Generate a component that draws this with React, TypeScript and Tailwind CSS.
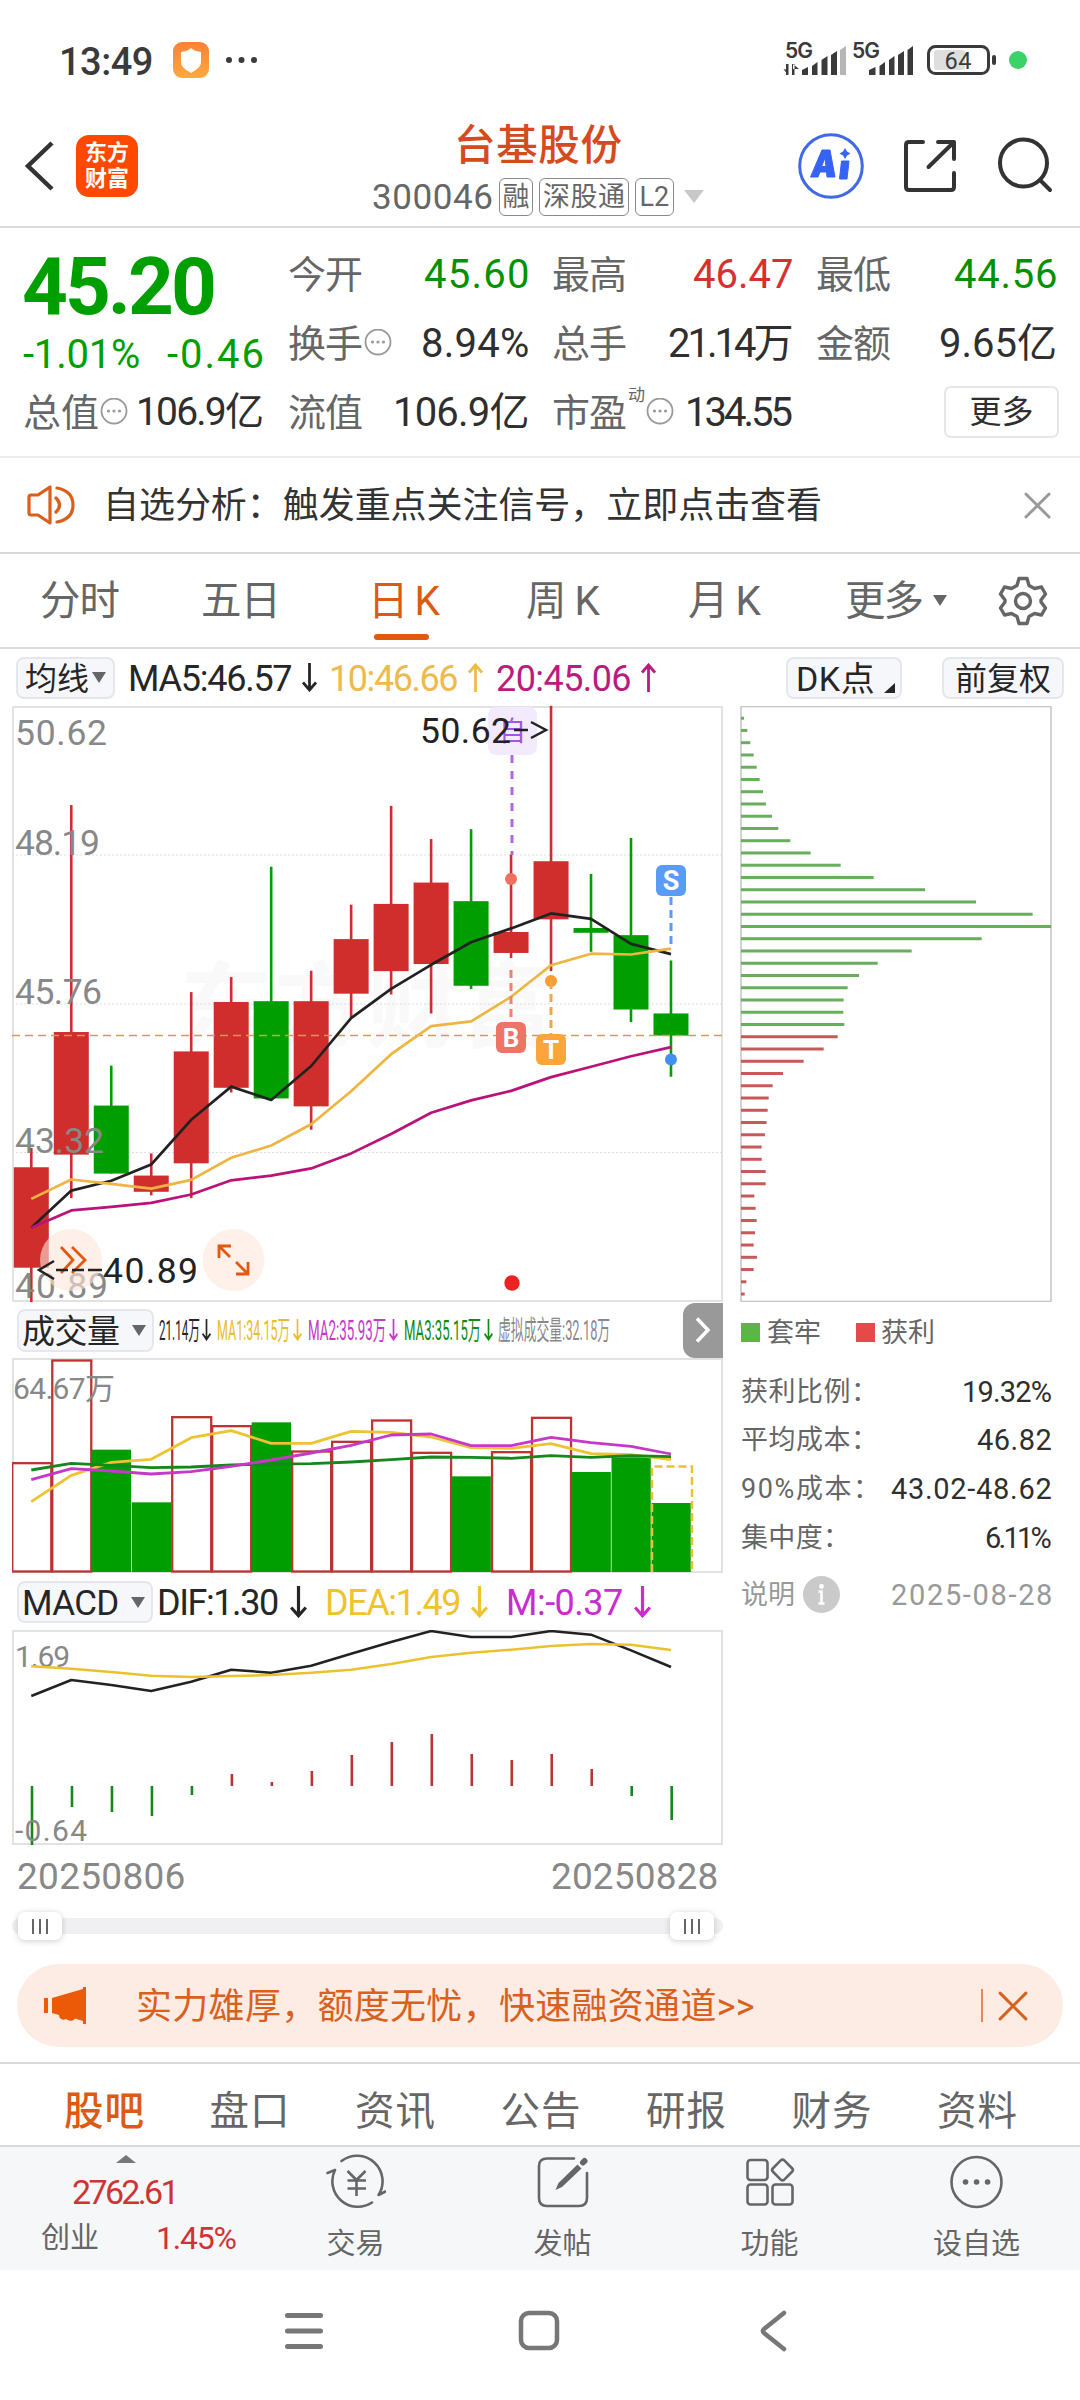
import { useLayoutEffect, useRef, useState } from "react";
import type { ReactNode } from "react";

/* Text set to a given width, either by tracking or by condensing the glyphs. */
function Fit({ w, children, className = "", squeeze = false }: { w: number; children: string; className?: string; squeeze?: boolean }) {
  const ref = useRef<HTMLSpanElement>(null);
  const [natural, setNatural] = useState(0);
  useLayoutEffect(() => {
    if (ref.current && !natural) setNatural(ref.current.offsetWidth);
  }, [natural]);
  const n = Math.max(1, children.length - 1);
  const style = !natural
    ? undefined
    : squeeze
      ? { transform: `scaleX(${w / natural})` }
      : { letterSpacing: `${(w - natural) / n}px` };
  return (
    <span className={`inline-block shrink-0 translate-y-px whitespace-nowrap leading-none ${className}`} style={{ width: w }}>
      <span ref={ref} className="inline-block origin-left" style={style}>
        {children}
      </span>
    </span>
  );
}

function Caret({ className = "", w = 14, h = 11 }: { className?: string; w?: number; h?: number }) {
  return (
    <svg className={`shrink-0 ${className}`} width={w} height={h} viewBox="0 0 14 11" preserveAspectRatio="none">
      <path d="M0 0H14L7 11Z" fill="currentColor" />
    </svg>
  );
}

function Arrow({ up = false, w = 15, h = 29, className = "" }: { up?: boolean; w?: number; h?: number; className?: string }) {
  return (
    <svg className={`shrink-0 ${className}`} width={w} height={h} viewBox="0 0 15 29" fill="none" stroke="currentColor" strokeWidth="2.800" preserveAspectRatio="none">
      {up ? <path d="M7.5 29V1.5M1 9.500L7.5 2L14 9.500" /> : <path d="M7.5 0V27.5M1 19.500L7.5 27L14 19.500" />}
    </svg>
  );
}

function InfoDots({ className = "" }: { className?: string }) {
  return (
    <svg className={`ml-px shrink-0 text-[#999] ${className}`} width="28" height="28" viewBox="0 0 28 28">
      <circle cx="14" cy="13" r="12.5" fill="none" stroke="currentColor" strokeWidth="1.8" />
      <circle cx="8.5" cy="13" r="1.6" fill="currentColor" />
      <circle cx="14" cy="13" r="1.6" fill="currentColor" />
      <circle cx="19.5" cy="13" r="1.6" fill="currentColor" />
    </svg>
  );
}

function Cross({ size, stroke, className = "" }: { size: number; stroke: number; className?: string }) {
  return (
    <svg className={`shrink-0 ${className}`} width={size} height={size} viewBox="0 0 28 28" fill="none" stroke="currentColor" strokeWidth={stroke} strokeLinecap="round">
      <path d="M2 2L26 26M26 2L2 26" />
    </svg>
  );
}

function StatusBar() {
  return (
    <div className="flex h-[118px] shrink-0 items-center pl-[59px] text-[#3a3a3a]">
      <Fit w={94} className="mt-[3px] text-[38px] font-medium">13:49</Fit>
      <svg className="ml-[20px] mt-px" width="36" height="36" viewBox="0 0 36 36">
        <defs>
          <linearGradient id="shield" x1="0" y1="0" x2="0" y2="1">
            <stop offset="0" stopColor="#f9813a" />
            <stop offset="1" stopColor="#ffa93c" />
          </linearGradient>
        </defs>
        <rect width="36" height="36" rx="9" fill="url(#shield)" />
        <path d="M18 6C21 9 25 9.500 28 10V20C28 25 23 28 18 31C13 28 8 25 8 20V10C11 9.500 15 9 18 6Z" fill="#fff" />
      </svg>
      <svg className="ml-[16px] mt-px" width="34" height="8" viewBox="0 0 34 8" fill="#3a3a3a">
        <circle cx="4" cy="4" r="3" />
        <circle cx="16.500" cy="4" r="3" />
        <circle cx="29" cy="4" r="3" />
      </svg>
      <svg className="ml-[521px] mt-[2px]" width="250" height="56" viewBox="780 32 250 56">
        <g fill="#3a3a3a">
          <text x="785" y="58" fontSize="21" fontWeight="600" textLength="28" fontFamily="Inter, sans-serif">5G</text>
          <text x="852" y="58" fontSize="21" fontWeight="600" textLength="28" fontFamily="Inter, sans-serif">5G</text>
          <path d="M786 64V75H788.500V64ZM783.500 69L788 75V70ZM792 75V64H794.500V75ZM799 69L793 64V69Z" />
          <path d="M802 70L808 67V75H802ZM812 66L817.500 62V75H812ZM821.500 60L827.500 56V75H821.500ZM831 55L837 51V75H831Z" />
          <path d="M840 50L846 46V75H840Z" fill="#b5b5b5" />
          <path d="M869 70L875.500 67V75H869ZM879.500 66L885 62V75H879.500ZM889 60L894.500 56V75H889ZM898 55L904 51V75H898ZM907.500 50L913 46V75H907.500Z" />
        </g>
        <rect x="934" y="50" width="31" height="20" rx="3" fill="#dedede" />
        <rect x="928.500" y="46.500" width="60" height="27" rx="7" fill="none" stroke="#3a3a3a" strokeWidth="3" />
        <rect x="992" y="55" width="4" height="10" rx="2" fill="#3a3a3a" />
        <text x="944.500" y="69" fontSize="23.500" fontWeight="400" textLength="27" fill="#3a3a3a">64</text>
        <circle cx="1018" cy="60" r="9" fill="#3bd269" />
      </svg>
    </div>
  );
}

function Tag({ children, w, tw }: { children: string; w: number; tw: number }) {
  return (
    <span className="flex h-[38px] items-center justify-center rounded-[6px] border border-[#8a8a8a]" style={{ width: w }}>
      <Fit w={tw} className="text-[27px]">{children}</Fit>
    </span>
  );
}

function Header() {
  return (
    <div className="flex h-[110px] shrink-0 items-start border-b-2 border-[#dcdcdc] pl-6">
      <svg className="mt-[22px]" width="30" height="52" viewBox="0 0 30 52" fill="none" stroke="#333" strokeWidth="4.500">
        <path d="M28 3L4 26L28 49" />
      </svg>
      <div className="ml-[22px] mt-[17px] flex size-[62px] flex-col items-center justify-center rounded-[13px] bg-[#ff4800] text-[22px] font-bold text-white">
        <span className="leading-[26px]">东方</span>
        <span className="leading-[26px]">财富</span>
      </div>
      <div className="ml-[232px] flex w-[336px] flex-col items-center">
        <Fit w={168} className="mt-[6px] text-[41.500px] font-medium text-[#d64a20]">台基股份</Fit>
        <div className="mt-[12px] flex items-center gap-[6px] text-[#666]">
          <Fit w={121} className="text-[35px]">300046</Fit>
          <Tag w={34} tw={27}>融</Tag>
          <Tag w={90} tw={82}>深股通</Tag>
          <Tag w={39} tw={30}>L2</Tag>
          <Caret className="ml-1 text-[#c8c8c8]" w={20} h={13} />
        </div>
      </div>
      <svg className="ml-[89px] mt-[12px]" width="265" height="72" viewBox="795 130 265 72" fill="none">
        <circle cx="831" cy="166" r="31.300" stroke="#3f69e6" strokeWidth="3" />
        <g fill="#3563f5">
          <path d="M822 150H830L835 177H827L826.500 172H820L818 177H810.500ZM825 158L821.500 166.500H826Z" fillRule="evenodd" stroke="#3563f5" strokeLinejoin="round" />
          <path d="M841.500 161H849L847 179H839.500Z" stroke="#3563f5" strokeLinejoin="round" />
          <path d="M845 148L847 151.500L850.500 153.500L847 155.500L845 159L843 155.500L839.500 153.500L843 151.500Z" />
        </g>
        <g stroke="#333" strokeWidth="4" strokeLinecap="round" strokeLinejoin="round">
          <path d="M923 142H909Q906 142 906 145V187Q906 190 909 190H951Q954 190 954 187V173M938 142H954V159M954 142L928.500 167" />
          <circle cx="1023.500" cy="163" r="23.500" />
          <path d="M1040 180L1050 190" />
        </g>
      </svg>
    </div>
  );
}

function Cell({ label, lw = 75, value, vw, color = "text-[#2f2f2f]", after }: { label: string; lw?: number; value: string; vw: number; color?: string; after?: ReactNode }) {
  return (
    <div className="flex h-[69px] w-[241px] items-center justify-between">
      <div className="flex items-center">
        <Fit w={lw} className="text-[38px] text-[#666]">{label}</Fit>
        {after}
      </div>
      <Fit w={vw} className={`text-[40px] ${color}`}>{value}</Fit>
    </div>
  );
}

function Quote() {
  return (
    <div className="flex h-[230px] shrink-0 border-b-2 border-[#ececec] pl-[23px] pt-[11px]">
      <div className="w-[241px] text-[#009f00]">
        <Fit w={195} className="-ml-px mt-[7px] text-[80px] font-bold">45.20</Fit>
        <div className="mt-[6px] flex h-[44px] items-center justify-between">
          <Fit w={117} className="text-[40px]">-1.01%</Fit>
          <Fit w={97} className="text-[40px]">-0.46</Fit>
        </div>
        <div className="mt-[1px] flex h-[69px] items-center text-[#2f2f2f]">
          <Fit w={76} className="text-[38px] text-[#666]">总值</Fit>
          <InfoDots />
          <Fit w={128} className="ml-[8px] text-[39px]">106.9亿</Fit>
        </div>
      </div>
      <div className="ml-[24px] grid grid-cols-[241px_241px_241px] content-start gap-x-[23px]">
        <Cell label="今开" value="45.60" vw={105} color="text-[#009200]" />
        <Cell label="最高" value="46.47" vw={100} color="text-[#d6302f]" />
        <Cell label="最低" value="44.56" vw={103} color="text-[#009200]" />
        <Cell label="换手" value="8.94%" vw={108} after={<InfoDots />} />
        <Cell label="总手" value="21.14万" vw={125} />
        <Cell label="金额" value="9.65亿" vw={118} />
        <Cell label="流值" value="106.9亿" vw={136} />
        <Cell
          label="市盈"
          value="134.55"
          vw={108}
          after={
            <>
              <span className="-mt-[32px] ml-px text-[17px] leading-none text-[#666]">动</span>
              <InfoDots className="ml-[4px]" />
            </>
          }
        />
        <div className="flex h-[69px] items-center justify-end">
          <span className="-mr-[2px] flex h-[52px] w-[115px] items-center justify-center rounded-[7px] border-2 border-[#e6e6e6] text-[32px] leading-none text-[#2f2f2f]">更多</span>
        </div>
      </div>
    </div>
  );
}

function Notice() {
  return (
    <div className="flex h-[96px] shrink-0 items-center border-b-2 border-[#d8d8d8] pl-[27px]">
      <svg width="48" height="42" viewBox="0 0 48 42" fill="none" stroke="#d95f1c" strokeWidth="3.200" strokeLinejoin="round" strokeLinecap="round">
        <path d="M4 11H11L23 3V39L11 31H4Q2 31 2 29V13Q2 11 4 11Z" />
        <path d="M29 14Q36 21 29 28" />
        <path d="M30 4Q46 7 46 21Q46 35 30 38" />
      </svg>
      <Fit w={719} className="ml-[28px] text-[36px] text-[#333]">自选分析：触发重点关注信号，立即点击查看</Fit>
      <Cross size={27} stroke={3} className="ml-[202px] text-[#999]" />
    </div>
  );
}

const periods = [
  { label: "分时", cls: "ml-[40px]", w: 80 },
  { label: "五日", cls: "ml-[81px]", w: 80 },
  { label: "日K", cls: "ml-[87px]", w: 72 },
  { label: "周K", cls: "ml-[86px]", w: 74 },
  { label: "月K", cls: "ml-[88px]", w: 73 },
  { label: "更多", cls: "ml-[84px]", w: 79 },
];

function Periods() {
  return (
    <div className="flex h-[95px] shrink-0 items-center border-b-2 border-[#dcdcdc] text-[#666]">
      {periods.map((p) => (
        <div key={p.label} className={`relative ${p.cls} ${p.label === "日K" ? "text-[#dc5a12]" : ""}`}>
          <Fit w={p.w} className="text-[40.500px]">{p.label}</Fit>
          {p.label === "日K" && <div className="absolute left-[6px] top-[54px] h-[6px] w-[55px] rounded-full bg-[#de5a10]" />}
        </div>
      ))}
      <Caret className="ml-[9px]" />
      <svg className="ml-[51px]" width="50" height="50" viewBox="0 0 50 50" fill="none" stroke="#666" strokeWidth="3.400" strokeLinejoin="round">
        <path d="M21 2.500H29L31 9.500L36.500 12.500L43.500 11L47.500 18L43 24V26L47.500 32L43.500 39L36.500 37.500L31 40.500L29 47.500H21L19 40.500L13.500 37.500L6.500 39L2.500 32L7 26V24L2.500 18L6.500 11L13.500 12.500L19 9.500Z" />
        <circle cx="25" cy="25" r="7.500" />
      </svg>
    </div>
  );
}

const pill = "flex shrink-0 items-center rounded-[8px] border-2 border-[#e5e7ec] bg-[#f6f7fa] text-[#262626]";

function MaBar() {
  return (
    <div className="flex h-[57px] shrink-0 items-center pl-[16px]">
      <div className={`${pill} h-[42px] w-[99px] pl-[7px]`}>
        <Fit w={64} className="text-[32px]">均线</Fit>
        <Caret className="ml-[3px] text-[#666]" />
      </div>
      <Fit w={165} className="ml-[13px] text-[36px] text-[#262626]">MA5:46.57</Fit>
      <Arrow className="ml-[9px] text-[#262626]" />
      <Fit w={130} className="ml-[12px] text-[36px] text-[#efba4d]">10:46.66</Fit>
      <Arrow up className="ml-[9px] text-[#efba4d]" />
      <Fit w={136} className="ml-[13px] text-[36px] text-[#b91c7e]">20:45.06</Fit>
      <Arrow up className="ml-[9px] text-[#b91c7e]" />
      <div className={`${pill} ml-[130px] h-[42px] w-[116px] pl-[8px]`}>
        <Fit w={79} className="text-[34px]">DK点</Fit>
        <svg className="ml-[9px] mt-[20px]" width="11" height="10" viewBox="0 0 11 10">
          <path d="M11 0V10H0Z" fill="#262626" />
        </svg>
      </div>
      <div className={`${pill} ml-[40px] h-[42px] w-[122px] justify-center`}>
        <Fit w={96} className="text-[32px]">前复权</Fit>
      </div>
    </div>
  );
}

/* Horizontal position of the n-th trading day. */
const dayX = (i: number) => 19.3 + i * 39.98;
const line = (values: number[], y: (v: number) => number) => values.map((v, i) => `${dayX(i).toFixed(1)},${y(v).toFixed(1)}`).join(" ");

const RED = "#cf2e2c";
const GREEN = "#009e00";

/* up?, high, body top, body bottom, low */
const candles: [number, number, number, number, number][] = [
  [1, 1158, 1207, 1461, 1548], [1, 291, 865, 1175, 1285], [0, 950, 1051, 1223, 1223], [1, 1172, 1228, 1269, 1278],
  [1, 764, 914, 1197, 1285], [1, 726, 789, 1006, 1018], [0, 447, 787, 1033, 1033], [1, 710, 787, 1053, 1112],
  [1, 543, 630, 768, 828], [1, 293, 541, 711, 770], [1, 377, 487, 693, 818], [0, 352, 534, 748, 756],
  [1, 416, 612, 665, 678], [1, 40, 433, 580, 711], [0, 465, 602, 614, 662], [0, 374, 620, 808, 840], [0, 684, 818, 874, 978],
];
const ma5 = [1360, 1266, 1241, 1200, 1087, 1003, 1037, 951, 830, 756, 695, 638, 603, 565, 579, 642, 668];
const ma10 = [1287, 1238, 1249, 1261, 1239, 1183, 1152, 1098, 1015, 921, 850, 838, 776, 696, 667, 669, 654];
const ma20 = [1360, 1316, 1307, 1297, 1276, 1240, 1228, 1210, 1172, 1123, 1069, 1038, 1014, 979, 953, 926, 903];
const priceY = (v: number) => v / 2.529 - 16;

function CandleChart() {
  return (
    <svg className="block overflow-visible" width="711" height="596" viewBox="0 0 711 596">
      <rect x="1" y="1" width="709" height="594" fill="#fff" stroke="#e2e2e2" strokeWidth="2" />
      <text x="168" y="334" fontSize="93" fontWeight="700" textLength="374" fill="#f9f9f9">东方财富</text>
      <g stroke="#dedede" strokeDasharray="2 2">
        <path d="M0 149H711M0 298H711M0 446.500H711" />
      </g>
      {candles.map(([up, h, t, b, l], i) => (
        <g key={i} fill={up ? RED : GREEN}>
          <rect x={dayX(i) - 1.3} y={priceY(h)} width="2.600" height={priceY(l) - priceY(h)} />
          <rect x={dayX(i) - 17.5} y={priceY(t)} width="35" height={priceY(b) - priceY(t)} />
        </g>
      ))}
      <path d="M0 329.500H711" stroke="#cf9d55" strokeWidth="1.500" strokeDasharray="8 5" />
      <g fontSize="35.500" fill="#888">
        <text x="3" y="39" textLength="92">50.62</text>
        <text x="3" y="149" textLength="85">48.19</text>
        <text x="3" y="298" textLength="87">45.76</text>
        <text x="3" y="447" textLength="89">43.32</text>
        <text x="3" y="592" textLength="93">40.89</text>
      </g>
      <g fill="none" strokeWidth="2.700" strokeLinejoin="round">
        <polyline points={line(ma5, priceY)} stroke="#222" />
        <polyline points={line(ma10, priceY)} stroke="#f0b441" />
        <polyline points={line(ma20, priceY)} stroke="#bb1279" />
      </g>
      <g>
        <rect x="476" y="1" width="49" height="48" rx="8" fill="#f4eafd" />
        <text x="487" y="35" fontSize="27" fill="#a158dd">自</text>
        <path d="M500 49V149" stroke="#a66be0" strokeWidth="3" strokeDasharray="8 8" />
        <circle cx="499" cy="173" r="6" fill="#f0705f" />
        <path d="M499 264V316" stroke="#f0806f" strokeWidth="3" strokeDasharray="8 5" />
        <rect x="484" y="316" width="30" height="31" rx="6" fill="#ee7466" />
        <text x="499" y="340.500" fontSize="26" fontWeight="700" textAnchor="middle" fill="#fff">B</text>
        <circle cx="539" cy="275" r="6" fill="#f79d33" />
        <path d="M539 275V328" stroke="#f3a548" strokeWidth="3" strokeDasharray="8 5" />
        <rect x="524" y="328" width="30" height="31" rx="6" fill="#fba53b" />
        <text x="539" y="352.500" fontSize="26" fontWeight="700" textAnchor="middle" fill="#fff">T</text>
        <rect x="644" y="159" width="30" height="31" rx="6" fill="#5b9bf8" />
        <text x="659" y="184" fontSize="27" fontWeight="700" textAnchor="middle" fill="#fff">S</text>
        <path d="M659 191V242" stroke="#5b9bf8" strokeWidth="3" strokeDasharray="8 5" />
        <circle cx="659" cy="353.500" r="6" fill="#4190ee" />
        <circle cx="500" cy="577" r="7.700" fill="#ee2222" />
      </g>
      <circle cx="59" cy="554" r="31" fill="#fee5d8" fillOpacity="0.600" />
      <circle cx="221.500" cy="554" r="31" fill="#fff1ea" />
      <g fill="none" stroke="#e4590f" strokeWidth="2.800">
        <path d="M49 541L61 554L49 567M60 541L73 554L60 567" />
        <path d="M219 540H207V552M207 540L218 551M224 568H236V556M236 568L224 556" />
      </g>
      <g fontSize="35.500" fill="#222">
        <text x="408" y="36.500" textLength="91">50.62</text>
        <text x="91" y="576.500" textLength="95">40.89</text>
      </g>
      <g fill="none" stroke="#222" strokeWidth="2.500">
        <path d="M502 24H516M519 16L534 24L519 32" />
        <path d="M42 555L27 564L42 573M44 564H56M60 564H72M76 564H90" />
      </g>
    </svg>
  );
}

const volumes: [number, number][] = [
  [1, 488], [1, 180], [0, 449], [0, 607], [1, 350], [1, 377], [0, 367], [1, 453], [1, 424],
  [1, 360], [1, 457], [0, 529], [1, 455], [1, 352], [0, 516], [0, 472], [0, 609],
];
const vol1 = [605, 526, 487, 478, 413, 392, 430, 430, 394, 397, 411, 443, 445, 431, 461, 464, 479];
const vol2 = [539, 506, 513, 522, 515, 499, 480, 459, 436, 405, 402, 437, 437, 412, 428, 439, 462];
const vol3 = [510, 490, 496, 503, 501, 495, 492, 491, 486, 479, 471, 472, 475, 467, 472, 467, 470];
const volY = (v: number) => v / 3 - 58;

function VolumeChart() {
  return (
    <svg className="block" width="711" height="216" viewBox="0 0 711 216">
      <rect x="1" y="1" width="709" height="213" fill="none" stroke="#e2e2e2" strokeWidth="2" />
      {volumes.map(([up, t], i) =>
        up ? (
          <rect key={i} x={dayX(i) - 19} y={volY(t) + 0.5} width="39" height={213 - volY(t)} fill="#fff" stroke="#bb3431" strokeWidth="2.300" />
        ) : (
          <rect key={i} x={dayX(i) - 19.5} y={volY(t)} width="39.300" height={214 - volY(t)} fill={GREEN} />
        ),
      )}
      <path d="M640 214V108.500H680V214" fill="none" stroke="#e8c234" strokeWidth="2.500" strokeDasharray="8 4" />
      <text x="1" y="41" fontSize="30" textLength="102" fill="#888">64.67万</text>
      <g fill="none" strokeWidth="2.800" strokeLinejoin="round">
        <polyline points={line(vol1, volY)} stroke="#edc233" />
        <polyline points={line(vol3, volY)} stroke="#15871c" />
        <polyline points={line(vol2, volY)} stroke="#c637ca" />
      </g>
    </svg>
  );
}

const dif = [348, 300, 315, 333, 305, 269, 278, 257, 221, 186, 153, 171, 171, 153, 164, 211, 261];
const dea = [259, 266, 276, 287, 291, 288, 285, 278, 269, 252, 231, 218, 209, 198, 192, 194, 210];
const hist = [795, 681, 696, 708, 645, 582, 606, 573, 525, 486, 462, 522, 540, 522, 567, 648, 720];
const macdY = (v: number) => v / 3 - 50;

function MacdChart() {
  return (
    <svg className="block" width="711" height="216" viewBox="0 0 711 216">
      <rect x="1" y="1" width="709" height="213" fill="none" stroke="#e2e2e2" strokeWidth="2" />
      {hist.map((v, i) => (
        <rect key={i} x={dayX(i) - 0.6} y={macdY(Math.min(v, 618))} width="2.600" height={Math.abs(v - 618) / 3} fill={v < 618 ? "#bb3431" : "#15871c"} />
      ))}
      <g fontSize="30" fill="#888">
        <text x="3" y="37" textLength="55">1.69</text>
        <text x="3" y="211" textLength="72">-0.64</text>
      </g>
      <g fill="none" strokeWidth="2.500" strokeLinejoin="round">
        <polyline points={line(dif, macdY)} stroke="#222" />
        <polyline points={line(dea, macdY)} stroke="#ebc22c" />
      </g>
    </svg>
  );
}

function VolumeBar() {
  return (
    <div className="flex h-[56px] items-center pl-[5px]">
      <div className={`${pill} h-[43px] w-[137px] pl-[3px]`}>
        <Fit w={98} className="text-[33px]">成交量</Fit>
        <Caret className="ml-[12px] text-[#666]" w={14} h={11} />
      </div>
      <Fit squeeze w={41} className="ml-[5px] text-[27px] text-[#262626]">21.14万</Fit>
      <Arrow w={9} h={22} className="ml-[2px] text-[#262626]" />
      <Fit squeeze w={73} className="ml-[6px] text-[27px] text-[#e8bd2c]">MA1:34.15万</Fit>
      <Arrow w={9} h={22} className="ml-[3px] text-[#e8bd2c]" />
      <Fit squeeze w={78} className="ml-[6px] text-[27px] text-[#c637ca]">MA2:35.93万</Fit>
      <Arrow w={9} h={22} className="ml-[3px] text-[#c637ca]" />
      <Fit squeeze w={77} className="ml-[6px] text-[27px] text-[#128a14]">MA3:35.15万</Fit>
      <Arrow w={9} h={22} className="ml-[3px] text-[#128a14]" />
      <Fit squeeze w={112} className="ml-[5px] text-[27px] text-[#888]">虚拟成交量:32.18万</Fit>
      <div className="ml-auto flex h-[55px] w-[40px] items-center justify-center rounded-l-[12px] bg-[#999]">
        <svg width="16" height="26" viewBox="0 0 16 26" fill="none" stroke="#fff" strokeWidth="3.500">
          <path d="M2 1.500L13 13L2 24.500" />
        </svg>
      </div>
    </div>
  );
}

function MacdBar() {
  return (
    <div className="flex h-[56px] items-center pl-[5px]">
      <div className={`${pill} h-[42px] w-[136px] pl-[3px]`}>
        <Fit w={97} className="text-[35px]">MACD</Fit>
        <Caret className="ml-[12px] text-[#666]" w={14} h={11} />
      </div>
      <Fit w={122} className="ml-[4px] text-[36px] text-[#262626]">DIF:1.30</Fit>
      <Arrow w={17} h={32} className="ml-[11px] text-[#262626]" />
      <Fit w={136} className="ml-[18px] text-[36px] text-[#eec32b]">DEA:1.49</Fit>
      <Arrow w={17} h={32} className="ml-[10px] text-[#eec32b]" />
      <Fit w={117} className="ml-[18px] text-[36px] text-[#cb2bd2]">M:-0.37</Fit>
      <Arrow w={17} h={32} className="ml-[11px] text-[#cb2bd2]" />
    </div>
  );
}

function Handle() {
  return (
    <div className="flex h-[28px] w-[44px] items-center justify-center gap-[5px] rounded-[7px] bg-white shadow-[0_1px_6px_rgba(0,0,0,0.2)]">
      <i className="h-[15px] w-[2px] bg-[#666]" />
      <i className="h-[15px] w-[2px] bg-[#666]" />
      <i className="h-[15px] w-[2px] bg-[#666]" />
    </div>
  );
}

/* Bar lengths of the holding-cost distribution, top price first. */
const profile = [
  42, 52, 61, 71, 80, 89, 99, 108, 126, 145, 181, 242, 332, 431, 585, 738, 908, 963, 755, 545, 443, 387, 353, 341, 340, 343,
  323, 281, 221, 159, 128, 116, 113, 110, 105, 95, 95, 107, 107, 73, 77, 80, 75, 71, 81, 71, 49, 44,
];

function Profile() {
  return (
    <svg className="block" width="312" height="596" viewBox="0 0 312 596">
      <rect x="1" y="0.500" width="310" height="595" fill="none" stroke="#c8c8c8" strokeWidth="1.600" />
      {profile.map((v, i) => (
        <rect key={i} x="1" y={10.7 + i * 12.252} width={(v - 33) / 3} height="3" fill={i < 26 ? "#69ae5c" : "#c75a58"} />
      ))}
    </svg>
  );
}

const stats = [
  { label: "获利比例：", lw: 137, value: "19.32%", vw: 90 },
  { label: "平均成本：", lw: 137, value: "46.82", vw: 75 },
  { label: "90%成本：", lw: 139, value: "43.02-48.62", vw: 161 },
  { label: "集中度：", lw: 109, value: "6.11%", vw: 67 },
];

function CostPanel() {
  return (
    <div className="ml-[17px] w-[312px]">
      <Profile />
      <div className="flex h-[60px] items-center pl-px text-[27px] text-[#666]">
        <i className="size-[19px] bg-[#5bb646]" />
        <Fit w={54} className="ml-[7px]">套牢</Fit>
        <i className="ml-[35px] size-[19px] bg-[#e54a49]" />
        <Fit w={54} className="ml-[6px]">获利</Fit>
      </div>
      <div className="mt-[5px]">
        {stats.map((s) => (
          <div key={s.label} className="flex h-[48.600px] items-center justify-between pl-px">
            <Fit w={s.lw} className="text-[27px] text-[#666]">{s.label}</Fit>
            <Fit w={s.vw} className="-ml-8 text-[29px] text-[#2f2f2f]">{s.value}</Fit>
          </div>
        ))}
      </div>
      <div className="mt-[9px] flex h-[48px] items-center pl-px text-[#999]">
        <Fit w={54} className="text-[27px]">说明</Fit>
        <svg className="ml-[8px]" width="37" height="37" viewBox="0 0 37 37">
          <circle cx="18.500" cy="18.500" r="18.500" fill="#cacaca" />
          <circle cx="18.500" cy="10.500" r="2.400" fill="#fff" />
          <path d="M15.500 15.500H18.500V27M15.500 27.500H21.500" stroke="#fff" strokeWidth="2.600" fill="none" />
        </svg>
        <Fit w={161} className="ml-auto text-[29px]">2025-08-28</Fit>
      </div>
    </div>
  );
}

function Promo() {
  return (
    <div className="mx-[17px] mt-[24px] flex h-[83px] shrink-0 items-center rounded-full bg-[#fdece3] pl-[27px] text-[#d9601d]">
      <svg width="42" height="37" viewBox="0 0 42 37" fill="#ec5a08">
        <path d="M0 11H4V26H0ZM8 11L39 2V0H42V37H39V34L31 31.500C29 35 25 34 22 32C18 34 15 31 15 28L8 26Z" />
      </svg>
      <Fit w={619} className="ml-[50px] text-[36px]">{"实力雄厚，额度无忧，快速融资通道>>"}</Fit>
      <i className="ml-[226px] h-[33px] w-[2px] bg-[#dd8a5c]" />
      <Cross size={30} stroke={2.8} className="ml-[15px]" />
    </div>
  );
}

const sections = ["股吧", "盘口", "资讯", "公告", "研报", "财务", "资料"];

function BottomBar() {
  return (
    <div className="flex h-[125px] shrink-0 border-t-2 border-[#d8dadb] bg-[#f6f7f9] text-[#666]">
      <div className="flex w-[252px] flex-col items-center pt-[8px]">
        <svg width="20" height="8" viewBox="0 0 20 8">
          <path d="M0 8L10 0L20 8Z" fill="#777" />
        </svg>
        <Fit w={108} className="mt-[11px] text-[34px] text-[#cf3333]">2762.61</Fit>
        <div className="mt-[13px] flex w-full items-center pl-[41px]">
          <Fit w={58} className="text-[29px]">创业</Fit>
          <Fit w={81} className="ml-[57px] text-[32px] text-[#cf3333]">1.45%</Fit>
        </div>
      </div>
      {[
        {
          label: "交易",
          icon: (
            <>
              <path d="M15.500 7A25.500 25.500 0 0 1 52.500 41L59.500 37.500" />
              <path d="M46 48.500A25.500 25.500 0 0 1 9 16L1.500 19" />
              <path d="M21.500 17L30.500 26L39.500 17M21.500 26.500H40M21.500 34.500H40M30.500 26V42" strokeLinecap="butt" />
            </>
          ),
        },
        {
          label: "发帖",
          icon: (
            <>
              <path d="M41 4.500H14Q6 4.500 6 12V44Q6 52 14 52H46Q54 52 54 44V19" />
              <path d="M22.500 36L25.500 29L44.500 10.500L48.500 14.500L29 33Z" fill="#666" stroke="none" />
              <path d="M50 8.500L51.500 7" strokeWidth="6" />
            </>
          ),
        },
        {
          label: "功能",
          icon: (
            <>
              <rect x="7.500" y="6" width="20" height="20" rx="3" />
              <rect x="7.500" y="30.500" width="20" height="20" rx="3" />
              <rect x="32.500" y="30.500" width="20" height="20" rx="3" />
              <rect x="34.500" y="8" width="16" height="16" rx="2.500" transform="rotate(45 42.500 16)" />
            </>
          ),
        },
        {
          label: "设自选",
          icon: (
            <>
              <circle cx="29.500" cy="28" r="25" />
              <path d="M18.500 28H18.600M29.500 28H29.600M40.500 28H40.600" strokeWidth="5.500" />
            </>
          ),
        },
      ].map((b) => (
        <div key={b.label} className="flex w-[207px] flex-col items-center pt-[7px]">
          <svg width="60" height="56" viewBox="0 0 60 56" fill="none" stroke="#666" strokeWidth="2.600" strokeLinecap="round" strokeLinejoin="round">
            {b.icon}
          </svg>
          <span className="mt-[20px] text-[29px] leading-none">{b.label}</span>
        </div>
      ))}
    </div>
  );
}

export default function App() {
  return (
    <div className="flex h-[2400px] w-[1080px] flex-col overflow-hidden bg-white font-[Roboto,'Noto_Sans_CJK_SC',sans-serif]">
      <StatusBar />
      <Header />
      <Quote />
      <Notice />
      <Periods />
      <MaBar />
      <div className="flex shrink-0 pl-3">
        <div className="w-[711px]">
          <CandleChart />
          <VolumeBar />
          <VolumeChart />
          <MacdBar />
          <MacdChart />
          <div className="mt-[7px] flex h-[44px] items-center justify-between pl-[5px] pr-[5px] text-[37px] text-[#888]">
            <Fit w={168}>20250806</Fit>
            <Fit w={167}>20250828</Fit>
          </div>
          <div className="mt-[15px] flex h-[28px] items-center">
            <div className="flex h-[16px] w-full items-center justify-between rounded-full bg-[#f0f0f2] pl-[6px] pr-[9px]">
              <Handle />
              <Handle />
            </div>
          </div>
        </div>
        <CostPanel />
      </div>
      <Promo />
      <div className="mt-[15px] flex h-[83px] shrink-0 items-center justify-between border-t-2 border-[#d8dadb] pl-[64px] pr-[63px] pt-[12px] text-[#666]">
        {sections.map((s) => (
          <Fit key={s} w={80} className={s === "股吧" ? "text-[39.500px] font-medium text-[#dc5a12]" : "text-[39.500px]"}>{s}</Fit>
        ))}
      </div>
      <BottomBar />
      <svg className="mx-auto mt-[38px] shrink-0" width="560" height="46" viewBox="260 2308 560 46" fill="none" stroke="#777" strokeWidth="5" strokeLinecap="round" strokeLinejoin="round">
        <path d="M287.500 2315.500H320.500M287.500 2331H320.500M287.500 2346.500H320.500" />
        <rect x="521" y="2313" width="36" height="35" rx="8" strokeWidth="4.500" />
        <path d="M784 2313L764 2329Q762 2331 764 2333L784 2349" strokeWidth="4.500" />
      </svg>
    </div>
  );
}
